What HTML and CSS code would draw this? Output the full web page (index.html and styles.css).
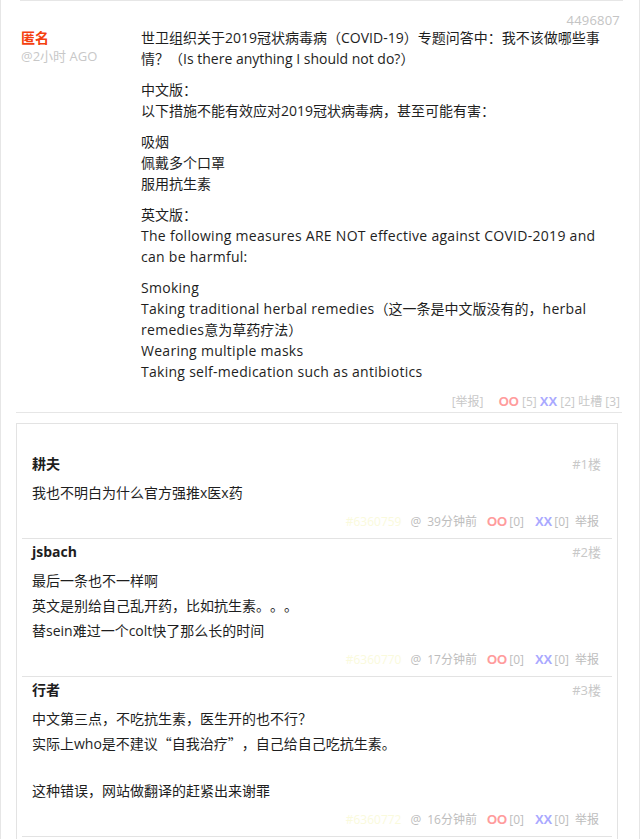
FILE: index.html
```html
<!DOCTYPE html>
<html lang="zh-CN">
<head>
<meta charset="utf-8">
<title>4496807</title>
<link rel="stylesheet" href="styles.css">
</head>
<body>
<div class="page">
  <div class="post">
    <div class="author">
      <strong class="author-name">匿名</strong>
      <small class="author-time">@2小时 AGO</small>
    </div>
    <div class="text">
      <div class="post-id">4496807</div>
      <p>世卫组织关于2019冠状病毒病（COVID-19）专题问答中：我不该做哪些事情？（Is there anything I should not do?）</p>
      <p>中文版：<br>以下措施不能有效应对2019冠状病毒病，甚至可能有害：</p>
      <p>吸烟<br>佩戴多个口罩<br>服用抗生素</p>
      <p>英文版：<br><span class="en">The following measures ARE NOT effective against COVID-2019 and can be harmful:</span></p>
      <p><span class="en">Smoking</span><br><span class="en">Taking traditional herbal remedies</span>（这一条是中文版没有的，<span class="en">herbal remedies</span>意为草药疗法）<br><span class="en">Wearing multiple masks</span><br><span class="en">Taking self-medication such as antibiotics</span></p>
      <div class="vote">
        <span class="report">[举报]</span>
        <span class="oo">OO</span> <span>[5]</span>
        <span class="xx">XX</span> <span>[2]</span>
        <span>吐槽</span> <span>[3]</span>
      </div>
    </div>
  </div>
  <div class="divider"></div>
  <div class="tucao">
    <div class="tucao-list">
      <div class="comment">
        <div class="comment-head"><span class="comment-name">耕夫</span><span class="floor">#1楼</span></div>
        <div class="comment-body">
          <p>我也不明白为什么官方强推x医x药</p>
        </div>
        <div class="comment-foot">
          <span class="cid">#6360759</span><span class="at">@</span><span class="ago">39分钟前</span><span class="oo">OO</span><span class="cnt">[0]</span><span class="xx">XX</span><span class="cnt">[0]</span><span class="rep">举报</span>
        </div>
      </div>
      <div class="comment">
        <div class="comment-head"><span class="comment-name">jsbach</span><span class="floor">#2楼</span></div>
        <div class="comment-body">
          <p>最后一条也不一样啊</p>
          <p>英文是别给自己乱开药，比如抗生素。。。</p>
          <p>替sein难过一个colt快了那么长的时间</p>
        </div>
        <div class="comment-foot">
          <span class="cid">#6360770</span><span class="at">@</span><span class="ago">17分钟前</span><span class="oo">OO</span><span class="cnt">[0]</span><span class="xx">XX</span><span class="cnt">[0]</span><span class="rep">举报</span>
        </div>
      </div>
      <div class="comment">
        <div class="comment-head"><span class="comment-name">行者</span><span class="floor">#3楼</span></div>
        <div class="comment-body">
          <p>中文第三点，不吃抗生素，医生开的也不行？</p>
          <p>实际上who是不建议<span class="cjk">“</span>自我治疗<span class="cjk">”</span>，自己给自己吃抗生素。</p>
          <p class="blank"></p>
          <p>这种错误，网站做翻译的赶紧出来谢罪</p>
        </div>
        <div class="comment-foot">
          <span class="cid">#6360772</span><span class="at">@</span><span class="ago">16分钟前</span><span class="oo">OO</span><span class="cnt">[0]</span><span class="xx">XX</span><span class="cnt">[0]</span><span class="rep">举报</span>
        </div>
      </div>
    </div>
  </div>
</div>
</body>
</html>
```

FILE: styles.css
```css
html, body {
  margin: 0;
  padding: 0;
  background: #fff;
  height: 839px;
  overflow: hidden;
}

body {
  font-family: "Open Sans", "Noto Sans CJK SC", sans-serif;
  font-size: 14px;
  color: #1e1e1e;
  text-spacing-trim: space-all;
}

.en {
  letter-spacing: 0.28px;
}

.cjk {
  font-family: "Noto Sans CJK SC", sans-serif;
}

.page {
  width: 640px;
  min-height: 900px;
  box-sizing: border-box;
  border-left: 1px solid #e6e6e6;
  border-right: 1px solid #e6e6e6;
}

.post {
  margin: 0 16px 0 19px;
  border-top: 1px solid #e6e6e6;
  padding: 13px 3px 0 1px;
  display: grid;
  grid-template-columns: 120px 1fr;
}

.author {
  padding-top: 13px;
  display: flex;
  flex-direction: column;
}

.author-name {
  color: #f4400f;
  font-weight: bold;
  font-size: 14px;
  line-height: 21px;
}

.author-time {
  color: #c8c8c8;
  font-size: 13px;
  line-height: 17px;
}

.post-id {
  text-align: right;
  color: #c4c4c4;
  font-size: 13px;
  line-height: 13px;
  letter-spacing: 0.2px;
}

.text p {
  margin: 0 0 10px;
  line-height: 21px;
}

.vote {
  text-align: right;
  font-size: 12px;
  line-height: 20px;
  color: #c8c8c8;
}

.vote .report {
  margin-right: 12px;
}

.oo, .xx {
  font-family: "Liberation Sans", Arial, sans-serif;
  font-weight: bold;
  font-size: 13px;
}

.oo { color: #ff9c9c; }
.xx { color: #a9a9ff; }

.divider {
  margin: 0 17px 0 15px;
  border-top: 1px solid #e6e6e6;
}

.tucao {
  margin: 10px 0 0 15px;
  width: 602px;
  box-sizing: border-box;
  border: 1px solid #e3e3e3;
  min-height: 480px;
}

.tucao-list {
  padding-top: 27px;
}

.comment {
  margin: 0 5px;
  padding: 2px 11px 6px 10px;
  border-bottom: 1px solid #e3e3e3;
}

.comment-head {
  display: flex;
  justify-content: space-between;
  align-items: center;
  line-height: 22px;
}

.comment-name {
  font-weight: bold;
  font-size: 14px;
  color: #1e1e1e;
}

.floor {
  color: #c8c8c8;
  font-size: 13px;
}

.comment-body {
  margin-top: 5px;
}

.comment-body p {
  margin: 0;
  line-height: 25px;
}

.comment-body p.blank {
  height: 22px;
}

.comment-foot {
  margin-top: 7px;
  padding-right: 2px;
  display: flex;
  justify-content: flex-end;
  align-items: center;
  font-size: 12px;
  line-height: 20px;
  color: #bdbdbd;
}

.comment-foot .cid {
  color: #fafadc;
  margin-right: 9px;
}

.comment-foot .at {
  margin-right: 6px;
}

.comment-foot .ago {
  margin-right: 10px;
}

.comment-foot .cnt {
  margin-left: 2px;
  margin-right: 11px;
}

.comment-foot .rep {
  margin-left: -5px;
}
```
